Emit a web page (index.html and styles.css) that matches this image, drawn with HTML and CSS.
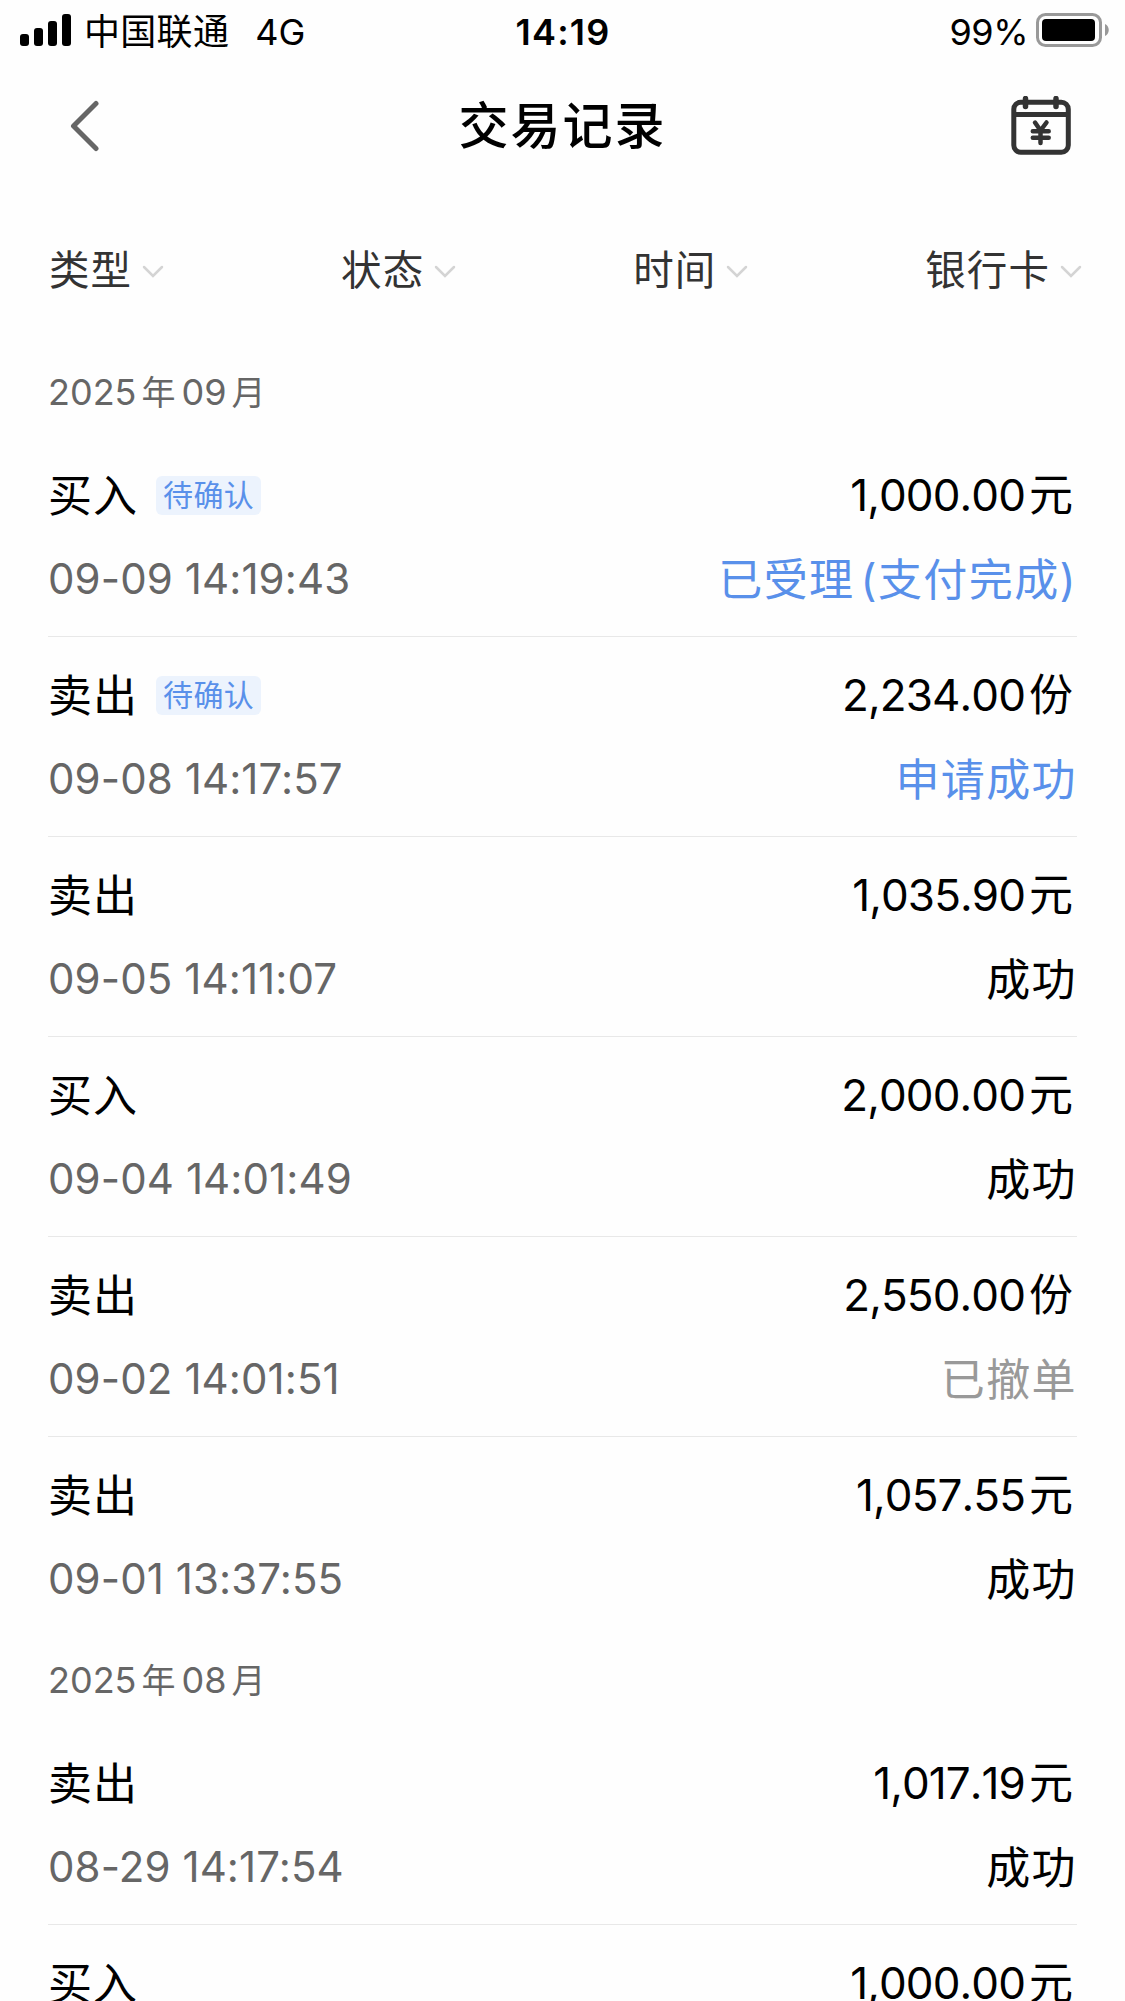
FILE: index.html
```
<!DOCTYPE html>
<html lang="zh-CN">

<head>
    <meta charset="UTF-8">
    <meta name="viewport" content="width=device-width, initial-scale=1.0">
    <title>交易记录</title>
    <link rel="stylesheet" href="styles.css">
</head>

<body>
    <!-- 状态栏 -->
    <div class="status">
        <div class="status-left">
            <svg class="signal" width="52" height="32" viewBox="0 0 52 32">
                <rect x="0" y="20" width="9" height="12" rx="3" />
                <rect x="14" y="14" width="9" height="18" rx="3" />
                <rect x="28" y="7" width="9" height="25" rx="3" />
                <rect x="42" y="0" width="9" height="32" rx="3" />
            </svg>
            <span class="carrier">中国联通</span>
            <span class="net">4G</span>
        </div>
        <div class="clock">14:19</div>
        <div class="status-right">
            <span class="percent">99%</span>
            <svg class="battery" width="74" height="34" viewBox="0 0 74 34">
                <rect x="1.5" y="1.5" width="63" height="31" rx="8" fill="none" stroke="#999" stroke-width="3" />
                <rect x="6" y="6" width="53" height="22" rx="4" />
                <path d="M69 11c5 2 5 10 0 12z" fill="#999" />
            </svg>
        </div>
    </div>

    <!-- 标题栏 -->
    <div class="header">
        <a href="#" class="back">
            <svg width="30" height="54" viewBox="0 0 30 54">
                <path d="M26 4.500L3.500 27L26 49.500" fill="none" stroke="#666" stroke-width="5" stroke-linecap="round" stroke-linejoin="round" />
            </svg>
        </a>
        <h1>交易记录</h1>
        <a href="#" class="calendar">
            <svg width="60" height="60" viewBox="0 0 60 60" fill="none" stroke="#333" stroke-width="5" stroke-linecap="round">
                <rect x="2.800" y="6.300" width="54.500" height="50" rx="7" />
                <path d="M5 18.500H55" />
                <path d="M14.500 2.500V10.500M45 2.500V10.500" stroke-width="5.500" />
                <path d="M24 26.500L29.500 34.500L35.500 26.500M29.500 35V47M21.800 35.300H37.700M21.800 41.800H37.700" stroke-width="4.500" />
            </svg>
        </a>
    </div>

    <!-- 筛选 -->
    <ul class="filter">
        <li><a href="#">类型<svg class="arrow" viewBox="0 0 22 14"><path d="M2 2L11 11L20 2" /></svg></a></li>
        <li><a href="#">状态<svg class="arrow" viewBox="0 0 22 14"><path d="M2 2L11 11L20 2" /></svg></a></li>
        <li><a href="#">时间<svg class="arrow" viewBox="0 0 22 14"><path d="M2 2L11 11L20 2" /></svg></a></li>
        <li><a href="#">银行卡<svg class="arrow" viewBox="0 0 22 14"><path d="M2 2L11 11L20 2" /></svg></a></li>
    </ul>

    <!-- 记录列表 -->
    <div class="month"><span>2025</span><b>年</b><span>09</span><b>月</b></div>
    <ul class="list">
        <li>
            <div class="line"><span class="type">买入</span><span class="tag">待确认</span><span class="amount">1,000.00<b>元</b></span></div>
            <div class="line"><span class="time">09-09 14:19:43</span><span class="state blue">已受理<i>(</i>支付完成<i>)</i></span></div>
        </li>
        <li>
            <div class="line"><span class="type">卖出</span><span class="tag">待确认</span><span class="amount">2,234.00<b>份</b></span></div>
            <div class="line"><span class="time">09-08 14:17:57</span><span class="state blue">申请成功</span></div>
        </li>
        <li>
            <div class="line"><span class="type">卖出</span><span class="amount">1,035.90<b>元</b></span></div>
            <div class="line"><span class="time">09-05 14:11:07</span><span class="state">成功</span></div>
        </li>
        <li>
            <div class="line"><span class="type">买入</span><span class="amount">2,000.00<b>元</b></span></div>
            <div class="line"><span class="time">09-04 14:01:49</span><span class="state">成功</span></div>
        </li>
        <li>
            <div class="line"><span class="type">卖出</span><span class="amount">2,550.00<b>份</b></span></div>
            <div class="line"><span class="time">09-02 14:01:51</span><span class="state gray">已撤单</span></div>
        </li>
        <li>
            <div class="line"><span class="type">卖出</span><span class="amount">1,057.55<b>元</b></span></div>
            <div class="line"><span class="time">09-01 13:37:55</span><span class="state">成功</span></div>
        </li>
    </ul>
    <div class="month"><span>2025</span><b>年</b><span>08</span><b>月</b></div>
    <ul class="list">
        <li>
            <div class="line"><span class="type">卖出</span><span class="amount">1,017.19<b>元</b></span></div>
            <div class="line"><span class="time">08-29 14:17:54</span><span class="state">成功</span></div>
        </li>
        <li class="half">
            <div class="line"><span class="type">买入</span><span class="amount">1,000.00<b>元</b></span></div>
        </li>
    </ul>
</body>

</html>
```
FILE: styles.css
```
/* 初始化 */
* {
    margin: 0;
    padding: 0;
    box-sizing: border-box;
}

body {
    height: 2001px;
    overflow: hidden;
    background-color: #fefefe;
    font-family: Inter, "Noto Sans CJK SC", sans-serif;
    color: #000;
}

ul {
    list-style: none;
}

a {
    color: inherit;
    text-decoration: none;
}

b,
i {
    font-weight: normal;
    font-style: normal;
}

svg {
    display: block;
    flex-shrink: 0;
}

/* 状态栏 */
.status {
    display: grid;
    grid-template-columns: 1fr auto 1fr;
    align-items: center;
    height: 63px;
    padding: 0 15px 0 20px;
    font-size: 36px;
    line-height: 62px;
}

.status-left,
.status-right {
    display: flex;
    align-items: center;
}

.status-right {
    justify-content: flex-end;
}

.signal,
.battery {
    margin-top: -3px;
}

.carrier {
    margin-left: 12px;
    padding-top: 1px;
    letter-spacing: .3px;
}

.net {
    margin-left: 26px;
}

.clock {
    margin-left: -4px;
    font-weight: 600;
    letter-spacing: 1.2px;
}

.percent {
    margin-right: 8px;
    letter-spacing: -.5px;
}

/* 标题栏 */
.header {
    display: grid;
    grid-template-columns: 1fr auto 1fr;
    align-items: center;
    height: 126px;
    padding: 0 54px;
}

.back {
    margin-left: 16px;
}

.header h1 {
    font-size: 50px;
    font-weight: 500;
    letter-spacing: 2px;
    line-height: 126px;
}

.calendar {
    justify-self: end;
}

/* 筛选 */
.filter {
    display: flex;
    justify-content: space-between;
    height: 160px;
    padding: 0 43px 0 49px;
    font-size: 40.5px;
    line-height: 163px;
    letter-spacing: 1.1px;
    color: #333;
}

.filter a {
    display: flex;
    align-items: center;
}

.arrow {
    width: 22px;
    height: 14px;
    margin: 2px 0 0 10px;
    fill: none;
    stroke: #d4d4d4;
    stroke-width: 2.5;
    stroke-linecap: round;
}

/* 月份 */
.month {
    display: flex;
    height: 88px;
    padding-left: 48px;
    font-size: 36px;
    line-height: 87px;
    color: #666;
}

.month b {
    margin: 0 6px 0 5px;
    font-size: 34px;
}

/* 记录列表 */
.list {
    padding: 0 48px;
}

.list li {
    height: 200px;
    padding-top: 16px;
    border-bottom: 1px solid #e8e8e8;
}

.list li:last-child {
    border-bottom: 0;
}

.list .half {
    height: auto;
}

.line {
    display: flex;
    align-items: center;
    height: 84px;
    line-height: 84px;
    font-size: 44px;
}

.half .line {
    height: 61px;
    align-items: flex-start;
}

.type {
    padding-top: 2px;
    letter-spacing: 1px;
}

.half .type {
    padding-top: 1px;
}

.tag {
    height: 39px;
    margin-left: 18px;
    padding: 0 7px;
    border-radius: 6px;
    background-color: #ecf3fd;
    font-size: 30px;
    line-height: 39px;
    letter-spacing: .4px;
    color: #5990ea;
}

.amount,
.state {
    margin-left: auto;
}

.amount {
    padding-right: 4px;
    font-kerning: none;
    letter-spacing: -.9px;
}

.amount b {
    margin-left: 4px;
    letter-spacing: 0;
}

.time {
    font-size: 42px;
    letter-spacing: .1px;
    color: #666;
}

.state {
    padding-top: 2px;
    letter-spacing: 1.4px;
}

.state i:first-child {
    margin-left: 6px;
}

.blue {
    color: #5990ea;
}

.gray {
    color: #999;
}
```
